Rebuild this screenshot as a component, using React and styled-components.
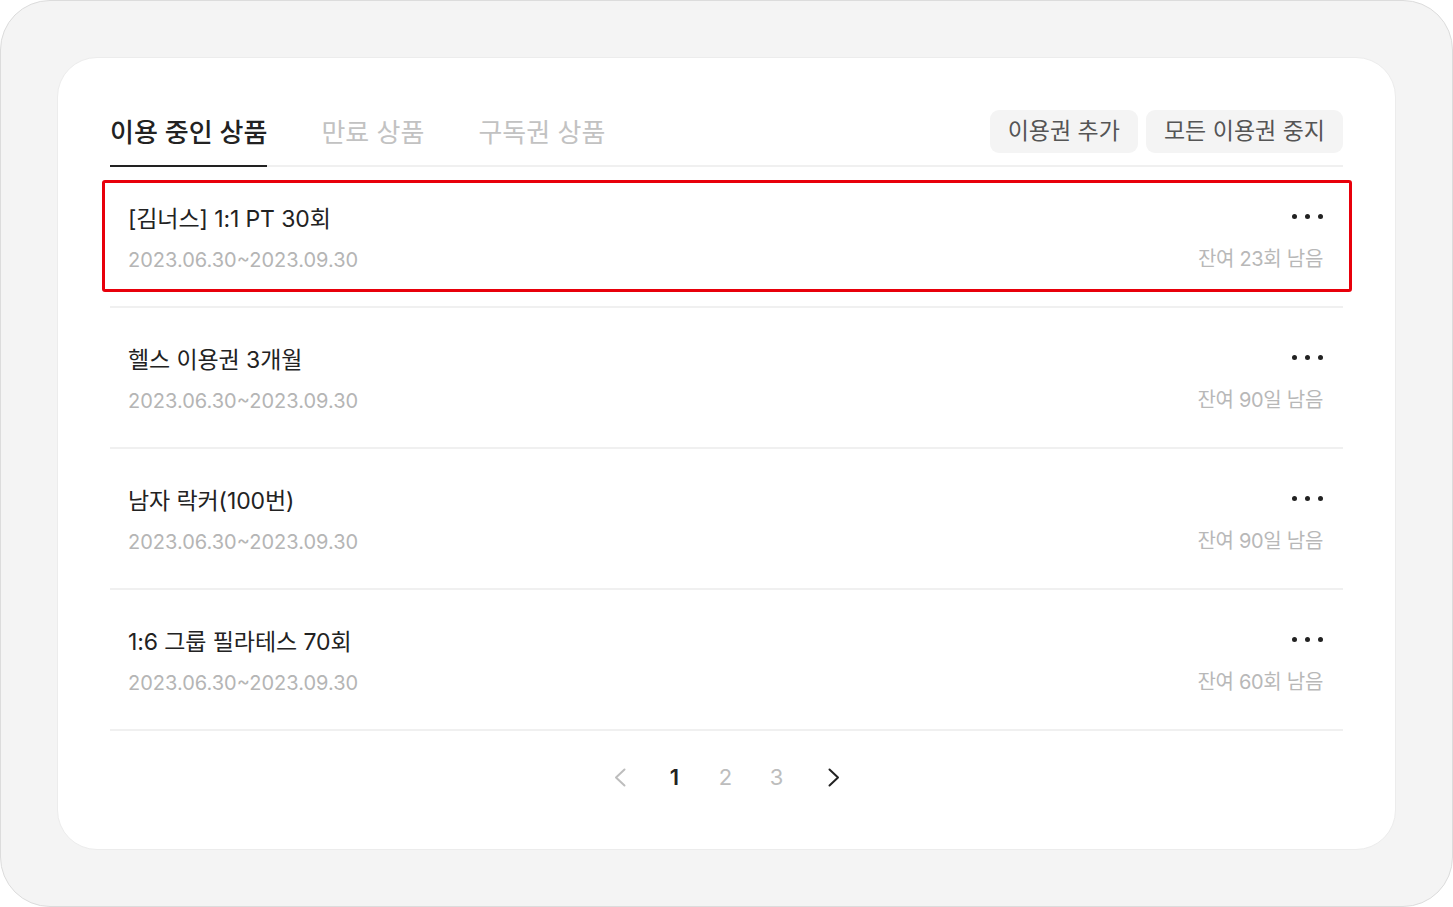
import React from 'react';
import styled, { createGlobalStyle } from 'styled-components';

const GlobalStyle = createGlobalStyle`
  body {
    margin: 0;
    background: #ffffff;
    font-family: Inter, "Noto Sans CJK KR", sans-serif;
  }
`

const Frame = styled.div`
  box-sizing: border-box;
  width: 1453px;
  height: 907px;
  padding: 56px;
  background: #f4f4f4;
  border: 1px solid #dcdcdc;
  border-radius: 50px;
`

const Card = styled.div`
  box-sizing: border-box;
  height: 793px;
  padding: 0 52px;
  background: #ffffff;
  border: 1px solid #ececec;
  border-radius: 40px;
`

const Header = styled.div`
  display: flex;
  justify-content: space-between;
  align-items: flex-start;
  padding-top: 52px;
  border-bottom: 2px solid #f0f0f0;
`

const Tabs = styled.div`
  display: flex;
  gap: 54px;
`

const Tab = styled.div`
  padding: 5px 0 14px;
  margin-bottom: -2px;
  font-size: 26px;
  line-height: 36px;
  font-weight: ${p => (p.active ? 500 : 400)};
  color: ${p => (p.active ? '#222222' : '#c2c2c2')};
  border-bottom: 2px solid ${p => (p.active ? '#222222' : 'transparent')};
`

const Actions = styled.div`
  display: flex;
  gap: 8px;
`

const ActionButton = styled.button`
  box-sizing: border-box;
  height: 43px;
  padding: 0 18px 1px;
  border: none;
  border-radius: 9px;
  background: #f4f4f4;
  color: #555555;
  font-family: inherit;
  font-size: 23px;
  line-height: 30px;
`

const Row = styled.div`
  position: relative;
  display: flex;
  justify-content: space-between;
  padding: 37px 20px 32px 18px;
  border-bottom: 2px solid #f0f0f0;
`

const Highlight = styled.div`
  position: absolute;
  top: 13px;
  bottom: 14px;
  left: -8px;
  right: -9px;
  border: 3px solid #e8000b;
  border-radius: 3px;
  pointer-events: none;
`

const Info = styled.div`
  display: flex;
  flex-direction: column;
  gap: 12px;
`

const Title = styled.div`
  font-size: 23px;
  line-height: 30px;
  color: #222222;
  letter-spacing: -0.1px;
`

const Period = styled.div`
  font-size: 20px;
  line-height: 28px;
  color: #b5b5b5;
`

const Side = styled.div`
  display: flex;
  flex-direction: column;
  align-items: flex-end;
  gap: 12px;
`

const Dots = styled.div`
  display: flex;
  gap: 8px;
  height: 30px;
  align-items: center;
  margin-top: -3px;
`

const Dot = styled.span`
  width: 5px;
  height: 5px;
  border-radius: 50%;
  background: #222222;
`

const Remain = styled.div`
  font-size: 20px;
  line-height: 28px;
  color: #b8b8b8;
  letter-spacing: -0.3px;
  margin-top: 2px;
`

const Pager = styled.div`
  display: flex;
  justify-content: center;
  align-items: center;
  gap: 27px;
  padding-top: 31px;
`

const PageNum = styled.span`
  width: 24px;
  text-align: center;
  font-size: 22px;
  line-height: 30px;
  font-weight: ${p => (p.current ? 600 : 400)};
  color: ${p => (p.current ? '#222222' : '#bdbdbd')};
`

const Arrow = styled.span`
  display: flex;
  width: 24px;
  justify-content: center;
  margin: ${p => (p.dir === 'left' ? '0 4px 0 -6px' : '0 -6px 0 6px')};
  color: ${p => (p.dim ? '#bdbdbd' : '#222222')};
`

const Chevron = ({ dir }) => (
  <svg width="12" height="19" viewBox="0 0 12 19" fill="none">
    <path
      d={dir === 'left' ? 'M10.5 1.5 L2 9.5 L10.5 17.5' : 'M1.5 1.5 L10 9.5 L1.5 17.5'}
      stroke="currentColor"
      strokeWidth="2"
      strokeLinecap="round"
      strokeLinejoin="round"
    />
  </svg>
)

const products = [
  { name: '[김너스] 1:1 PT 30회', remain: '잔여 23회 남음' },
  { name: '헬스 이용권 3개월', remain: '잔여 90일 남음' },
  { name: '남자 락커(100번)', remain: '잔여 90일 남음' },
  { name: '1:6 그룹 필라테스 70회', remain: '잔여 60회 남음' },
]

export default function App() {
  return (
    <Frame>
      <GlobalStyle />
      <Card>
        <Header>
          <Tabs>
            <Tab active>이용 중인 상품</Tab>
            <Tab>만료 상품</Tab>
            <Tab>구독권 상품</Tab>
          </Tabs>
          <Actions>
            <ActionButton>이용권 추가</ActionButton>
            <ActionButton>모든 이용권 중지</ActionButton>
          </Actions>
        </Header>

        {products.map((item, i) => (
          <Row key={item.name}>
            {i === 0 && <Highlight />}
            <Info>
              <Title>{item.name}</Title>
              <Period>2023.06.30~2023.09.30</Period>
            </Info>
            <Side>
              <Dots>
                <Dot />
                <Dot />
                <Dot />
              </Dots>
              <Remain>{item.remain}</Remain>
            </Side>
          </Row>
        ))}

        <Pager>
          <Arrow dir="left" dim><Chevron dir="left" /></Arrow>
          <PageNum current>1</PageNum>
          <PageNum>2</PageNum>
          <PageNum>3</PageNum>
          <Arrow dir="right"><Chevron dir="right" /></Arrow>
        </Pager>
      </Card>
    </Frame>
  )
}
